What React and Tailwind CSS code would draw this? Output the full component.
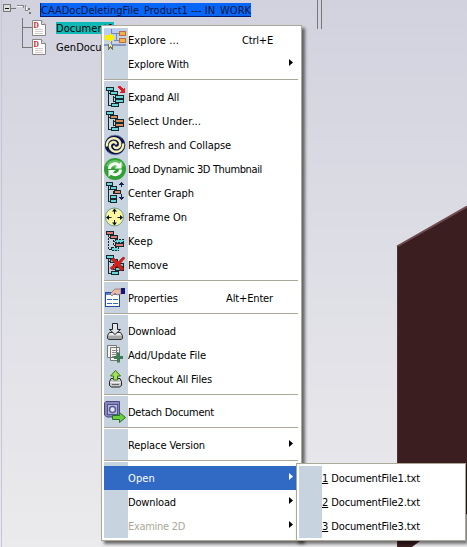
import React from "react";

const TEAL = "#66d6d8";
const RED = "#dd7a72";
const ORANGE = "#dd8b55";

function Icon({ children }) {
  return (
    <svg width="24" height="24" viewBox="0 0 24 24" className="block" shapeRendering="crispEdges">
      {children}
    </svg>
  );
}

function Node({ x, y, fill = TEAL, w = 8, dashed }) {
  return (
    <rect x={x + 0.5} y={y + 0.5} width={w - 1} height="3" fill={fill} stroke="#16282e" strokeDasharray={dashed ? "2 1" : undefined} />
  );
}

function Tree({ colors, dashed, children }) {
  return (
    <Icon>
      <path d="M4.500 6V20.500H7M4.500 8.500H6M9.500 11V16.500H11M9.500 12.500H11" fill="none" stroke="#16282e" strokeDasharray={dashed ? "2 1" : undefined} />
      <Node x={2} y={2} fill={colors[0]} />
      <Node x={6} y={6} fill={colors[1]} />
      <Node x={11} y={10} fill={colors[2]} w={9} dashed={dashed} />
      <Node x={11} y={14} fill={colors[3]} w={9} />
      <Node x={7} y={18} fill={colors[4]} dashed={dashed} />
      {children}
    </Icon>
  );
}

function ExploreIcon() {
  return (
    <Icon>
      <path d="M0 1h22v7H0z" fill="#b9cdf2" />
      <path d="M7.500 1V21M7 5.500H15M10 12.500H15M12.500 5V13M0 16.500H22" stroke="#6f86c6" fill="none" />
      <path d="M0 16h22v2H0z" fill="#8496bf" />
      <rect x="15.500" y="3.500" width="6" height="4" fill="#f0b43c" stroke="#c0694a" />
      <rect x="15.500" y="10.500" width="6" height="4" fill="#f0b43c" stroke="#c0694a" />
      <path d="M1 7h5V4l5 5.500L6 15v-3H1z" fill="#faf000" />
      <path d="M4.500 16v5l2-2 2 2v-4" fill="#e9e5c3" stroke="#77784f" />
    </Icon>
  );
}

function ExpandIcon() {
  return (
    <Tree colors={[TEAL, TEAL, TEAL, TEAL, TEAL]}>
      <path d="M14 1h2l3 3 2-2v6h-6l2-2-3-3z" fill="#e01b24" />
    </Tree>
  );
}

function SelectIcon() {
  return <Tree colors={[TEAL, ORANGE, ORANGE, ORANGE, TEAL]} />;
}

function RefreshIcon() {
  return (
    <svg width="24" height="24" viewBox="0 0 24 24" className="block">
      <ellipse cx="11" cy="12" rx="10.300" ry="10" fill="#0c1648" />
      <g fill="none" stroke="#f3efb5" strokeWidth="2.400" strokeLinecap="round">
        <path d="M2.800 12.500C3 6 9 3.800 13.500 6.300C17.500 9 16.800 14 13 15C11.500 15.300 10.500 14.500 10 13.500" />
        <path d="M19.200 11.500C19 18 13 20.200 8.500 17.700C4.500 15 5.200 10 9 9C10.500 8.700 11.500 9.500 12 10.500" />
      </g>
      <path d="M5 3.800c4-2.600 10-2 13 1.500M17 20.200c-4 2.600-10 2-13-1.500" stroke="#7f93c6" strokeWidth=".8" fill="none" />
    </svg>
  );
}

function ThumbnailIcon() {
  return (
    <svg width="24" height="24" viewBox="0 0 24 24" className="block">
      <circle cx="11" cy="12" r="11" fill="#2f9f36" />
      <path d="M2 9A9.500 9 0 0 1 20 9Q11 12 2 9" fill="#66c465" />
      <g fill="none" stroke="#f7fff5" strokeWidth="3">
        <path d="M5.500 12C5.500 7.500 10.500 5.500 14.500 8" />
        <path d="M16.500 12.500C16.500 17 11.500 19 7.500 16.500" />
      </g>
      <path d="M17.500 4.500V11.500H10.500zM4.500 20V13H11.500z" fill="#f7fff5" />
    </svg>
  );
}

function CenterIcon() {
  return (
    <Icon>
      <path d="M4.500 5V20.500H7M4.500 8.500H7M9.500 10V12.500H11" stroke="#16282e" fill="none" />
      <Node x={2} y={1} w={7} />
      <Node x={6} y={5} w={7} />
      <Node x={10} y={9} fill={ORANGE} w={7} />
      <Node x={6} y={14} w={7} />
      <Node x={6} y={18} w={7} />
      <path d="M17.500 1V6M15 3.500h5M16 2.500h3M17.500 13V19M15 16.500h5M16 17.500h3" stroke="#16204f" fill="none" />
    </Icon>
  );
}

function ReframeIcon() {
  return (
    <svg width="24" height="24" viewBox="0 0 24 24" className="block">
      <circle cx="10.500" cy="12" r="9" fill="#fbf8a0" stroke="#6c9f9a" />
      <path d="M10.500 5v4M10.500 15v4M3.500 12.500h4M13.500 12.500h4" stroke="#111" />
      <path d="M10.500 3.500l-2.500 3h5zM10.500 20.500l-2.500-3h5zM2 12.500l3-2.500v5zM19 12.500l-3-2.500v5z" fill="#111" />
    </svg>
  );
}

function KeepIcon() {
  return <Tree colors={[RED, RED, TEAL, RED, TEAL]} dashed />;
}

function RemoveIcon() {
  return (
    <Tree colors={[TEAL, TEAL, TEAL, TEAL, TEAL]}>
      <path d="M7 6l3-1 4 4 5-5 2 1-5 6 4 5-3 2-4-5-5 4-2-2 5-4z" fill="#d91e18" stroke="#861b19" strokeWidth=".5" shapeRendering="auto" />
    </Tree>
  );
}

function PropertiesIcon() {
  return (
    <Icon>
      <rect x="1.500" y="6.500" width="14" height="14" fill="#fff" stroke="#28489a" />
      <path d="M2 7h13v2H2z" fill="#4f86dc" />
      <path d="M3 13h5v1H3zM9 13h5v1H9zM3 17h5v1H3zM9 17h5v1H9z" fill="#3167bd" />
      <path d="M6 8l5-5h6v5l-4 1-2-2-3 3z" fill="#e9bca7" stroke="#8d635a" strokeWidth=".7" shapeRendering="auto" />
      <path d="M17 2h4v6h-4z" fill="#10167d" />
    </Icon>
  );
}

function DownloadIcon() {
  return (
    <svg width="24" height="24" viewBox="0 0 24 24" className="block">
      <path d="M5.500 13.500h11l2 3v3l-1.500 1h-12l-1.500-1v-3z" fill="#a6a6a6" stroke="#333" />
      <path d="M6 14h10l1.500 2.500h-13z" fill="#eee" />
      <path d="M8.500 4.500h5v6h3L11 15.500 5.500 10.500h3z" fill="#e4e8ec" stroke="#222" />
    </svg>
  );
}

function AddFileIcon() {
  return (
    <svg width="24" height="24" viewBox="0 0 24 24" className="block">
      <path d="M3.500 2.500h9v12h-9zM6.500 4.500h9v13h-9z" fill="#f5f5f1" stroke="#777" />
      <path d="M8 7.500h6M8 9.500h6M8 11.500h6M8 13.500h5" stroke="#8c8c8c" />
      <path d="M13 9.500h3v3.500h3v3h-3v3.500h-3V16h-3v-3h3z" fill="#3f7b55" />
    </svg>
  );
}

function CheckoutIcon() {
  return (
    <svg width="24" height="24" viewBox="0 0 24 24" className="block">
      <path d="M7 11.500h9l1.500 3v4l-2 1.500h-8l-2-1.500v-4z" fill="#c8c8c8" stroke="#222" />
      <path d="M6 15.500h11" stroke="#eee" />
      <path d="M11.500 3.500l5 5.500h-3v4h-4V9h-3z" fill="#a2e356" stroke="#397124" />
      <path d="M8 17.500h7" stroke="#666" />
    </svg>
  );
}

function DetachIcon() {
  return (
    <svg width="24" height="24" viewBox="0 0 24 24" className="block">
      <path d="M2 1.500h13.500V17H3L.5 15V3z" fill="#8585ba" stroke="#49497f" />
      <rect x="3.500" y="4.500" width="10" height="10" fill="#b8b9dd" stroke="#51518b" />
      <circle cx="8.500" cy="9.500" r="3" fill="#e3e5f5" stroke="#5c5c93" strokeWidth="1.500" />
      <path d="M8.500 15.500h7v-3l6 5-6 5v-3h-7z" fill="#6bce3f" stroke="#27702a" />
    </svg>
  );
}

const groups = [
  [
    { label: "Explore ...", shortcut: "Ctrl+E", icon: ExploreIcon, w: "w-[51px]", sw: "w-[31px]" },
    { label: "Explore With", arrow: true, w: "w-[61px]" },
  ],
  [
    { label: "Expand All", icon: ExpandIcon, w: "w-[51px]" },
    { label: "Select Under...", icon: SelectIcon, w: "w-[73px]" },
    { label: "Refresh and Collapse", icon: RefreshIcon, w: "w-[103px]" },
    { label: "Load Dynamic 3D Thumbnail", icon: ThumbnailIcon, w: "w-[134px]" },
    { label: "Center Graph", icon: CenterIcon, w: "w-[66px]" },
    { label: "Reframe On", icon: ReframeIcon, w: "w-[59px]" },
    { label: "Keep", icon: KeepIcon, w: "w-[25px]" },
    { label: "Remove", icon: RemoveIcon, w: "w-[40px]" },
  ],
  [{ label: "Properties", shortcut: "Alt+Enter", icon: PropertiesIcon, w: "w-[50px]", sw: "w-[47px]" }],
  [
    { label: "Download", icon: DownloadIcon, w: "w-[48px]" },
    { label: "Add/Update File", icon: AddFileIcon, w: "w-[78px]" },
    { label: "Checkout All Files", icon: CheckoutIcon, w: "w-[84px]" },
  ],
  [{ label: "Detach Document", icon: DetachIcon, w: "w-[86px]" }],
  [{ label: "Replace Version", arrow: true, w: "w-[77px]" }],
  [
    { label: "Open", arrow: true, active: true, w: "w-[27px]" },
    { label: "Download", arrow: true, w: "w-[48px]" },
    { label: "Examine 2D", arrow: true, disabled: true, w: "w-[57px]" },
  ],
];

// Spreads the letters so that the label fills the width of its box.
function Label({ width, children }) {
  const ref = React.useRef(null);
  React.useLayoutEffect(() => {
    const el = ref.current;
    const inner = el.firstChild;
    inner.style.letterSpacing = "0px";
    const natural = inner.getBoundingClientRect().width;
    inner.style.letterSpacing = (el.clientWidth - natural) / el.textContent.length + "px";
  }, []);
  return (
    <span ref={ref} className={"block shrink-0 whitespace-nowrap pt-[2px] " + width}>
      <span className="inline-block">{children}</span>
    </span>
  );
}

function MenuItem({ item }) {
  const Glyph = item.icon;
  const tone = item.active ? "bg-[#316ac5] text-white" : item.disabled ? "text-[#aca899]" : "text-black";
  return (
    <div className={"flex h-6 w-[192px] items-center " + tone}>
      <div className={"h-6 w-6 shrink-0 " + (item.active ? "" : "bg-[#c7d3df]")}>{Glyph && <Glyph />}</div>
      <Label width={item.w}>{item.label}</Label>
      {item.shortcut && (
        <div className="ml-auto mr-[23px]">
          <Label width={item.sw}>{item.shortcut}</Label>
        </div>
      )}
      {item.arrow && (
        <svg width="4" height="7" viewBox="0 0 4 7" className={"mr-[3px] mb-[3px] ml-auto " + (item.active ? "text-white" : "text-black")}>
          <path d="M0 0l4 3.500L0 7z" fill="currentColor" />
        </svg>
      )}
    </div>
  );
}

function Separator() {
  return (
    <div className="w-[194px]">
      <div className="h-[3px] w-6 bg-[#c7d3df]" />
      <div className="h-px bg-[#aca899]" />
      <div className="h-px" />
      <div className="h-1 w-6 bg-[#c7d3df]" />
    </div>
  );
}

function DocumentIcon() {
  return (
    <svg width="14" height="16" viewBox="0 0 14 16" className="shrink-0">
      <path d="M.5.5h9l4 4v11H.5z" fill="#fff" stroke="#8b8585" />
      <path d="M9.500.5v4h4" fill="#ddd" stroke="#8b8585" />
      <text x="1.500" y="7.500" fontFamily="Liberation Serif, serif" fontSize="7.500" fontWeight="bold" fill="#c51c22">D</text>
      <path d="M3 9.500h8M3 11.500h8M3 13.500h8" stroke="#d7cccc" />
    </svg>
  );
}

export default function App() {
  return (
    <div className="relative h-[547px] w-[467px] overflow-hidden bg-linear-to-b from-[#d2d2df] to-[#ebebed] font-['DejaVu_Sans_Condensed','DejaVu_Sans',sans-serif] text-[11px] leading-[14px] text-black [font-stretch:condensed]">
      <svg width="467" height="547" className="absolute inset-0">
        <path d="M1.500 0V547" stroke="#c5c5d7" />
        <path d="M317.500 0V29M321.500 0V29" stroke="#77777e" />
        <path d="M397 246L467 206V514L420 541L412 547H397z" fill="#3b1e20" />
        <path d="M397 246.500L467 206.500" stroke="#704b50" strokeWidth="2" />
        <path d="M397.500 246V547" stroke="#4e3033" />
      </svg>

      <div className="relative flex h-14 flex-col">
        <div className="flex h-[19px] items-start">
          <svg width="40" height="18" viewBox="0 0 40 18" fill="none" shapeRendering="crispEdges">
            <rect x="3.500" y="4.500" width="7" height="7" fill="#deded9" stroke="#777" />
            <path d="M5 8.500h4" stroke="#111" />
            <path d="M11 8.500h5" stroke="#777" />
            <path d="M17 5.500h6v2M25.500 5v5h2" stroke="#888" />
            <path d="M17 6.500h5M26 7v3" stroke="#fff" />
            <path d="M28 8h2v2h-2zM29 12h2v2h-2z" fill="#777" />
          </svg>
          <div className="mt-[3px] flex h-[14px] w-[211px] items-center border-b border-l border-[#071d72] bg-[#0766f8] text-[#08163c]">
            <Label width="w-[210px]">CAADocDeletingFile_Product1 --- IN_WORK</Label>
          </div>
        </div>
        <div className="flex h-[19px] items-center">
          <div className="ml-[22px] h-[19px] w-[10px] border-l border-[#777]">
            <div className="h-[10px] border-b border-[#777]" />
          </div>
          <DocumentIcon />
          <div className="ml-[10px] flex h-3 w-[58px] items-center bg-[#10b9b6]">
            <Label width="w-[58px]">Document1</Label>
          </div>
        </div>
        <div className="flex h-[19px] items-center">
          <div className="ml-[22px] h-[19px] w-[10px]">
            <div className="h-[11px] border-b border-l border-[#777]" />
          </div>
          <DocumentIcon />
          <div className="ml-[10px]">
            <Label width="w-[78px]">GenDocument1</Label>
          </div>
        </div>
      </div>

      <div className="absolute left-[101px] top-[25px] h-[516px] w-[201px] border border-[#aca899] bg-white pl-[2px] pt-[2px] shadow-[3px_3px_3px_rgba(0,0,0,0.55)]">
        {groups.map((group, index) => (
          <React.Fragment key={index}>
            {index > 0 && <Separator />}
            {group.map((item) => (
              <MenuItem key={item.label} item={item} />
            ))}
          </React.Fragment>
        ))}
      </div>

      <div className="absolute left-[296px] top-[463px] h-[78px] w-[170px] border border-[#aca899] bg-white p-[2px] shadow-[2px_3px_3px_rgba(0,0,0,0.5)]">
        {[1, 2, 3].map((n) => (
          <div key={n} className="flex h-6 items-center">
            <div className="h-6 w-[23px] shrink-0 bg-[#c7d3df]" />
            <Label width="w-[98px]">
              <span className="underline">{n}</span> DocumentFile{n}.txt
            </Label>
          </div>
        ))}
      </div>
    </div>
  );
}
